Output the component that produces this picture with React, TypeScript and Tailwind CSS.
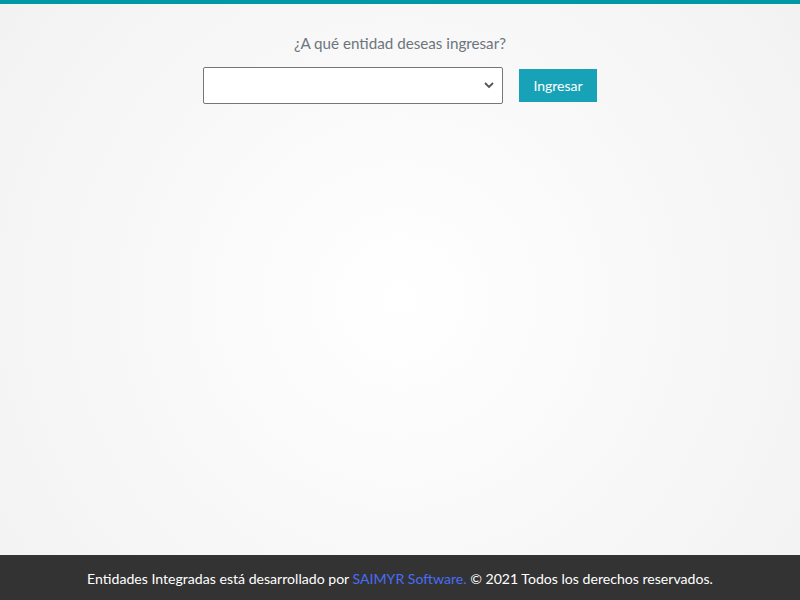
export default function App() {
  return (
    <div
      className="relative flex h-[600px] w-[800px] flex-col overflow-hidden bg-[radial-gradient(circle_at_50%_50%,#ffffff_0%,#f2f2f2_100%)]"
      style={{ fontFamily: '"Lato", "Noto Sans", sans-serif' }}
    >
      <div className="h-[4px] w-full bg-[#0097a7]" />

      <main className="flex flex-1 flex-col items-center">
        <p className="mt-[29px] text-[15.2px] leading-[20px] text-[#6c757d]">¿A qué entidad deseas ingresar?</p>
        <div className="mt-[14px] flex items-center gap-4">
          <div className="relative h-[37px] w-[300px] rounded-[2px] border border-[#767676] bg-white">
            <svg
              className="absolute right-[8px] top-[13px]"
              width="10"
              height="8"
              viewBox="0 0 10 8"
              fill="none"
              stroke="#555"
              strokeWidth="1.8"
            >
              <path d="M1 2l4 4 4-4" />
            </svg>
          </div>
          <button className="h-[33px] w-[78px] bg-[#17a2b8] text-[14px] text-white">Ingresar</button>
        </div>
      </main>

      <footer className="flex h-[45px] items-center justify-center bg-[#333333] pt-[3px] text-[14.1px] text-white">
        <span>
          Entidades Integradas está desarrollado por <span className="text-[#4a6cf7]">SAIMYR Software.</span> © 2021
          Todos los derechos reservados.
        </span>
      </footer>
    </div>
  )
}
